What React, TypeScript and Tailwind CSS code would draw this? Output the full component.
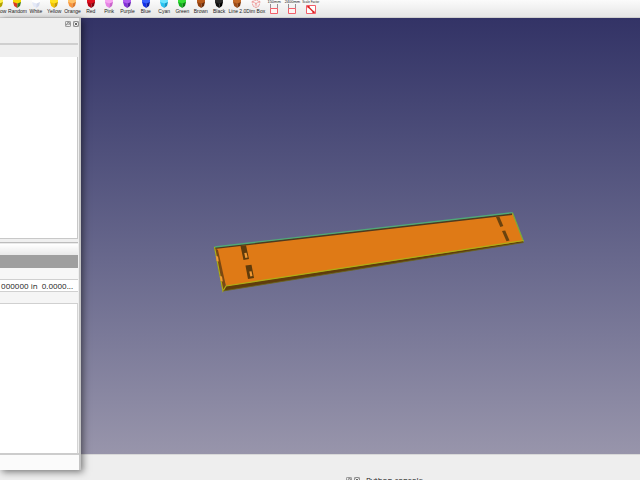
import { clsx } from 'clsx';

type Tool = { label: string; light?: string; mid?: string; dark?: string; kind?: 'dim' | 'size' | 'scale' };

const TOOLS: Tool[] = [
  { label: 'Yellow', light: '#fff04a', mid: '#e6d400', dark: '#b3a200' },
  { label: 'Random', light: '#f5d800', mid: '#d93a20', dark: '#3a7a20' },
  { label: 'White', light: '#ffffff', mid: '#e4e9f7', dark: '#d2d9ec' },
  { label: 'Yellow', light: '#ffe21f', mid: '#f2c500', dark: '#c79c00' },
  { label: 'Orange', light: '#ffc36b', mid: '#f9963c', dark: '#dd7a2c' },
  { label: 'Red', light: '#e01020', mid: '#b80012', dark: '#86000c' },
  { label: 'Pink', light: '#f7a6f2', mid: '#e884e6', dark: '#c964cb' },
  { label: 'Purple', light: '#b05cf0', mid: '#8430d8', dark: '#5c1ca8' },
  { label: 'Blue', light: '#3a62ff', mid: '#1230e8', dark: '#0b1ea6' },
  { label: 'Cyan', light: '#6ee6ff', mid: '#27c3f2', dark: '#119ac8' },
  { label: 'Green', light: '#35dd35', mid: '#12b31c', dark: '#0b8012' },
  { label: 'Brown', light: '#b85a1c', mid: '#94400e', dark: '#6b2c08' },
  { label: 'Black', light: '#2a2a2a', mid: '#101010', dark: '#000000' },
  { label: 'Line 2.0', light: '#c46a28', mid: '#a04c16', dark: '#78360c' },
  { label: 'Dim Box', kind: 'dim' },
  { label: '150mm', kind: 'size' },
  { label: '2400mm', kind: 'size' },
  { label: 'Scale Factor', kind: 'scale' },
];

function Cube({ light, mid, dark }: Tool) {
  return (
    <svg viewBox="0 0 10 8" className="h-2 w-2.5 shrink-0">
      <path d="M1 0h8v2.500L5.500 4 1 2.500z" fill={light} />
      <path d="M1 2 5.500 3.500 5.200 8 2.200 6z" fill={mid} />
      <path d="M9 2 5.500 3.500 5.200 8 8 6z" fill={dark} />
    </svg>
  );
}

function DimBox() {
  return (
    <svg viewBox="0 0 10 8" className="h-2 w-2.5 shrink-0" fill="none" stroke="#ee8a8a" strokeWidth=".8">
      <path d="M1 1.500 5 .2l4 1.300L5 3.500zM1 1.500 2 6l3 1.700V3.500M9 1.500 8 6 5 7.700" strokeDasharray="1.800 .6" />
      <path d="M2.500 6l5-4.500M2.500 1.500l5 4.500" strokeDasharray="1 1" />
    </svg>
  );
}

function SizeIcon() {
  return (
    <svg viewBox="0 0 12 10" className="h-2.5 w-3 shrink-0" fill="none">
      <path d="M2.500 0v4.500h7V0" stroke="#8a7f86" strokeWidth=".9" />
      <path d="M2.500 4.500h7v5h-7z" fill="#fdf4f4" stroke="#f25f6b" strokeWidth="1" />
    </svg>
  );
}

function ScaleIcon() {
  return (
    <svg viewBox="0 0 12 10" className="h-2.5 w-3 shrink-0" fill="none">
      <path d="M1.500 1.500h9v8h-9z" fill="#fff" stroke="#f25f6b" />
      <path d="M3 2.500l6 6" stroke="#d22" strokeWidth="1.200" />
      <path d="M2 2h3L3 4.500zM10 9H7l2-2.500z" fill="#d22" />
    </svg>
  );
}

function ToolButton({ tool }: { tool: Tool }) {
  const labelOnTop = tool.kind === 'size' || tool.kind === 'scale';
  return (
    <button
      type="button"
      className={clsx(
        'flex min-w-0 flex-1 items-center whitespace-nowrap',
        labelOnTop ? 'flex-col-reverse justify-end leading-[4px]' : 'flex-col text-[5px] leading-[6px]',
        tool.kind === 'size' && 'text-[4px]',
        tool.kind === 'scale' && 'text-[3px]',
      )}
    >
      {!tool.kind && <Cube {...tool} />}
      {tool.kind === 'dim' && <DimBox />}
      {tool.kind === 'size' && <SizeIcon />}
      {tool.kind === 'scale' && <ScaleIcon />}
      <span>{tool.label}</span>
    </button>
  );
}

function DockButtons() {
  return (
    <div className="flex gap-0.5">
      <button type="button" aria-label="Float" className="size-1.5">
        <svg viewBox="0 0 6 6" fill="none" stroke="#666" strokeWidth=".7">
          <rect x=".4" y=".4" width="5.200" height="5.200" rx="1" />
          <path d="M1.600 4.400V3h1.400M2.600 2.600V1.600h1.800v1.800H3.300" />
        </svg>
      </button>
      <button type="button" aria-label="Close" className="size-1.5">
        <svg viewBox="0 0 6 6" fill="none" stroke="#555" strokeWidth=".7">
          <rect x=".4" y=".4" width="5.200" height="5.200" rx="1" />
          <path d="M1.600 1.600l2.800 2.800M4.400 1.600 1.600 4.400" strokeWidth=".9" />
        </svg>
      </button>
    </div>
  );
}

function SidePanel() {
  return (
    <aside className="z-10 -mb-4 flex w-[81px] shrink-0 flex-col border-r-2 border-[#c4c4c4] bg-[#efefef] shadow-[2px_2px_7px_rgba(0,0,0,0.5)]">
      <div className="flex h-[25px] justify-end pt-[3px]">
        <DockButtons />
      </div>
      <div className="mr-px h-[14px] border-t-2 border-[#cfcfcf] bg-[#efefef]" />
      <div className="mr-px h-[182px] border-r border-b border-[#c8c8c8] bg-white" />
      <div className="h-[3px]" />
      <table className="mr-px border-collapse text-[8px] leading-[10px]">
        <thead>
          <tr className="h-[12px] border-t border-[#bdbdbd] bg-linear-to-b from-white to-[#e9e9e9]">
            <th aria-label="Value" />
          </tr>
        </thead>
        <tbody>
          <tr className="h-[13px] bg-[#9f9f9f]"><td /></tr>
          <tr className="h-[12px] border-b border-[#d0d0d0] bg-[#f7f7f7]"><td /></tr>
          <tr className="h-[12px] border-b border-[#d0d0d0] bg-white">
            <td className="p-0">
              <div className="flex w-[73px] justify-end whitespace-pre text-[#222]">000000 in  0.0000...</div>
            </td>
          </tr>
          <tr className="h-[12px] border-b border-[#d0d0d0] bg-[#f5f5f5]"><td /></tr>
        </tbody>
      </table>
      <div className="mr-px flex-1 border-r border-[#d4d4d4] bg-white" />
      <div className="h-[17px] border-t-2 border-[#cccccc] bg-[#fbfbfb]" />
    </aside>
  );
}

function Viewport() {
  return (
    <main className="min-w-0 flex-1 bg-linear-to-b from-[#333366] to-[#9895ab]">
      <svg viewBox="81 18 559 436" className="size-full" role="img" aria-label="Board model">
        {/* board: lower edge, left end, then the top face */}
        <path d="M222 286.500 523 239.500 523.500 242.500 223 291z" fill="#5f3c0c" />
        <path d="M214.500 247 512.500 213 523.500 241 226 286z" fill="#df7a16" />
        <path d="M214.500 248 218 250 226 286.500 222.500 290z" fill="#7a4812" />
        <path d="M214.500 248 512 214" stroke="#4e3a20" strokeWidth="2" />
        <path d="M214.500 247 512.500 212.700" stroke="#4fa878" strokeWidth="1.300" />
        <path d="M512.500 212.700 523.500 241.500" stroke="#78ae38" strokeWidth="1.100" />
        <path d="M214.500 247 223 291 226 286 523.500 240.500" fill="none" stroke="#adae16" strokeWidth="1.200" />
        <path d="M223 291 523.500 242.500" stroke="#6d6717" strokeWidth=".8" />
        <path d="M215.800 256l2.200.5.800 5-2.200-.5zM219.800 276l2.200.5.800 5-2.200-.5z" fill="#f19a35" />
        {/* slots */}
        <path d="M240.500 246 246 245.300 249 259 243.500 260z" fill="#5f3b0b" />
        <path d="M244.300 253 246.500 252.700 247.700 257.500 245.300 258z" fill="#f19a35" />
        <path d="M245.500 265.500 251.500 264.800 254 278 248 279z" fill="#5f3b0b" />
        <path d="M249.300 271.500 251.500 271.200 252.500 276 250.300 276.500z" fill="#f19a35" />
        <path d="M496 217 499.300 216.500 503.300 226 500.300 227z" fill="#6a420e" />
        <path d="M502 231 505.200 230.500 509.500 240.500 506.500 241.300z" fill="#6a420e" />
      </svg>
    </main>
  );
}

export default function App() {
  return (
    <div className="flex h-screen flex-col overflow-hidden bg-[#eeeeee] font-['Open_Sans','Noto_Sans',sans-serif] text-[#222]">
      <header className="h-[18px] shrink-0 overflow-hidden border-b border-[#cfcfcf] bg-linear-to-b from-[#fbfbfb] to-[#e6e6e6] font-['Liberation_Sans',sans-serif]">
        <div className="-ml-2.5 flex w-[330px]">
          {TOOLS.map((tool, i) => (
            <ToolButton key={i} tool={tool} />
          ))}
        </div>
      </header>
      <div className="flex min-h-0 flex-1">
        <SidePanel />
        <Viewport />
      </div>
      <footer className="h-[26px] shrink-0 overflow-hidden border-t border-[#d8d8d8] pl-[346px] pt-[20px]">
        <div className="flex items-center gap-1.5">
          <DockButtons />
          <h2 className="text-[8px] leading-[10px] font-medium">Python console</h2>
        </div>
      </footer>
    </div>
  );
}
